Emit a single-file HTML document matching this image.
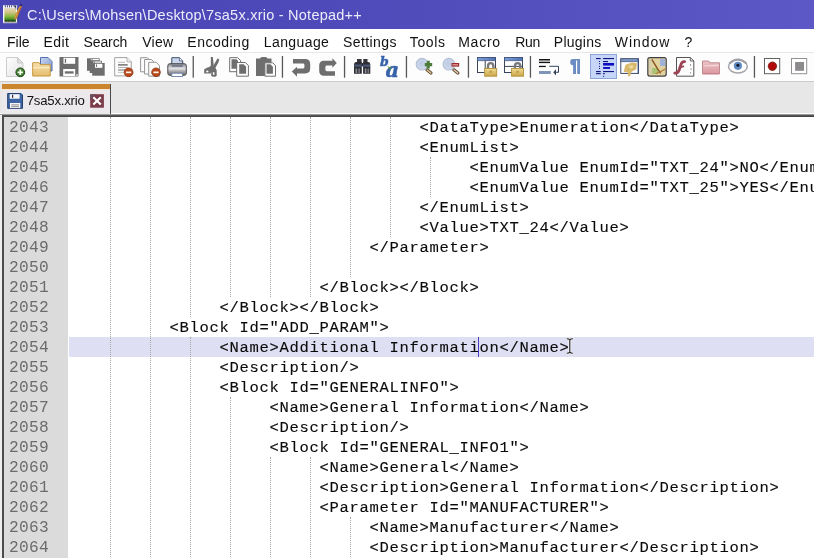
<!DOCTYPE html>
<html><head><meta charset="utf-8"><title>Notepad++</title>
<style>
html,body{margin:0;padding:0;}
body{width:814px;height:558px;overflow:hidden;position:relative;background:#eee;font-family:"Liberation Sans",sans-serif;}
#win{position:absolute;left:0;top:0;width:814px;height:558px;overflow:hidden;will-change:transform;opacity:.999}
#title{position:absolute;left:0;top:0;width:814px;height:29px;background:linear-gradient(90deg,#4a45b4 0%,#4e4ab9 40%,#5c59c6 100%);}
#title .t{position:absolute;left:27px;top:3.5px;color:#ecebfc;font-size:14.5px;letter-spacing:.24px;line-height:22px;white-space:pre;}
#menu{position:absolute;left:0;top:29px;width:814px;height:24px;background:#fff;}
#menu span{position:absolute;top:5.1px;font-size:14px;line-height:16px;color:#111;white-space:pre;}
#tool{position:absolute;left:0;top:52.4px;width:814px;height:29px;background:#fdfdfd;border-top:1.4px solid #e7e7e7;box-sizing:border-box}
#tabbar{position:absolute;left:0;top:81.3px;width:814px;height:34px;background:#e7e7e7;border-top:1px solid #cbcbcb;box-sizing:border-box}
#tab{position:absolute;left:2.1px;top:84.1px;width:108px;height:29.8px;background:#ece9ed;border-right:1.9px solid #4a4a4a;box-sizing:content-box}
#tab .bar{position:absolute;left:0;top:0;width:108px;height:5.4px;background:#cb852d;border-bottom:1px solid #fbe6cf}
#tab .lbl{position:absolute;left:24.6px;top:9.8px;letter-spacing:-.22px;font-size:13.2px;line-height:14px;color:#111;white-space:pre}
#edtop{position:absolute;left:2.1px;top:115.2px;width:812px;height:1.75px;background:linear-gradient(#5c5c5c,#3e3e3e)}
#edleft{position:absolute;left:2.1px;top:115.4px;width:1.8px;height:443px;background:#4c4c4c}
#edlite{position:absolute;left:0;top:112.7px;width:814px;height:2.7px;background:linear-gradient(#fdfdfd 0,#fdfdfd 62%,#9a9a9a 63%,#9a9a9a 100%)}
#lmargin{position:absolute;left:3.9px;top:116.9px;width:64px;height:441px;background:#dcdbdc}
#ed{position:absolute;left:68px;top:117px;width:746px;height:441px;background:#fff;overflow:hidden}
.ln{position:absolute;left:9.1px;font:16.2px/20px "Liberation Mono",monospace;letter-spacing:.28px;color:#6c6c6c;white-space:pre;height:20px;margin-top:.7px}
.cl{position:absolute;font:15.5px/20px "Liberation Mono",monospace;letter-spacing:.7px;color:#0a0a0a;-webkit-text-stroke:.12px #0a0a0a;white-space:pre;height:20px;margin-top:1.2px}
.g{position:absolute;width:0;border-left:1px dotted #a8a8a8;}
#hl{position:absolute;left:69px;top:337px;width:745px;height:20px;background:#dfdff3}
svg{position:absolute;overflow:visible}
</style></head><body><div id="win">
<div id="title"><span class="t">C:\Users\Mohsen\Desktop\7sa5x.xrio - Notepad++</span></div>
<div id="menu"><span style="left:7px;letter-spacing:0px">File</span><span style="left:43.6px;letter-spacing:0.4px">Edit</span><span style="left:83.5px;letter-spacing:-0.1px">Search</span><span style="left:142.2px;letter-spacing:0.3px">View</span><span style="left:187.3px;letter-spacing:0.5px">Encoding</span><span style="left:263.8px;letter-spacing:0.4px">Language</span><span style="left:343px;letter-spacing:0.4px">Settings</span><span style="left:409.8px;letter-spacing:0.6px">Tools</span><span style="left:458.2px;letter-spacing:0.75px">Macro</span><span style="left:515.3px;letter-spacing:-0.3px">Run</span><span style="left:553.8px;letter-spacing:0.25px">Plugins</span><span style="left:614.8px;letter-spacing:0.95px">Window</span><span style="left:684.5px;letter-spacing:0px">?</span></div>
<div id="tool"></div>
<div id="tabbar"></div>
<div id="edlite"></div>
<div id="tab"><div class="bar"></div><span class="lbl">7sa5x.xrio</span></div>
<div id="lmargin"></div><div id="ed"></div><div id="edtop"></div><div id="edleft"></div>
<div id="hl"></div>
<div class="g" style="left:110px;top:117px;height:440px"></div><div class="g" style="left:150px;top:117px;height:440px"></div><div class="g" style="left:190px;top:117px;height:200px"></div><div class="g" style="left:190px;top:337px;height:220px"></div><div class="g" style="left:230px;top:117px;height:180px"></div><div class="g" style="left:230px;top:397px;height:160px"></div><div class="g" style="left:270px;top:117px;height:180px"></div><div class="g" style="left:270px;top:457px;height:100px"></div><div class="g" style="left:310px;top:117px;height:180px"></div><div class="g" style="left:310px;top:457px;height:100px"></div><div class="g" style="left:350px;top:117px;height:160px"></div><div class="g" style="left:350px;top:517px;height:40px"></div><div class="g" style="left:390px;top:117px;height:120px"></div><div class="g" style="left:430px;top:157px;height:40px"></div>
<div class="ln" style="top:117px">2043</div><div class="cl" style="top:117px;left:419.4px">&lt;DataType&gt;Enumeration&lt;/DataType&gt;</div>
<div class="ln" style="top:137px">2044</div><div class="cl" style="top:137px;left:419.4px">&lt;EnumList&gt;</div>
<div class="ln" style="top:157px">2045</div><div class="cl" style="top:157px;left:469.4px">&lt;EnumValue EnumId="TXT_24"&gt;NO&lt;/EnumValue&gt;</div>
<div class="ln" style="top:177px">2046</div><div class="cl" style="top:177px;left:469.4px">&lt;EnumValue EnumId="TXT_25"&gt;YES&lt;/EnumValue&gt;</div>
<div class="ln" style="top:197px">2047</div><div class="cl" style="top:197px;left:419.4px">&lt;/EnumList&gt;</div>
<div class="ln" style="top:217px">2048</div><div class="cl" style="top:217px;left:419.4px">&lt;Value&gt;TXT_24&lt;/Value&gt;</div>
<div class="ln" style="top:237px">2049</div><div class="cl" style="top:237px;left:369.4px">&lt;/Parameter&gt;</div>
<div class="ln" style="top:257px">2050</div>
<div class="ln" style="top:277px">2051</div><div class="cl" style="top:277px;left:319.4px">&lt;/Block&gt;&lt;/Block&gt;</div>
<div class="ln" style="top:297px">2052</div><div class="cl" style="top:297px;left:219.4px">&lt;/Block&gt;&lt;/Block&gt;</div>
<div class="ln" style="top:317px">2053</div><div class="cl" style="top:317px;left:169.4px">&lt;Block Id="ADD_PARAM"&gt;</div>
<div class="ln" style="top:337px">2054</div><div class="cl" style="top:337px;left:219.4px">&lt;Name&gt;Additional Information&lt;/Name&gt;</div>
<div class="ln" style="top:357px">2055</div><div class="cl" style="top:357px;left:219.4px">&lt;Description/&gt;</div>
<div class="ln" style="top:377px">2056</div><div class="cl" style="top:377px;left:219.4px">&lt;Block Id="GENERALINFO"&gt;</div>
<div class="ln" style="top:397px">2057</div><div class="cl" style="top:397px;left:269.4px">&lt;Name&gt;General Information&lt;/Name&gt;</div>
<div class="ln" style="top:417px">2058</div><div class="cl" style="top:417px;left:269.4px">&lt;Description/&gt;</div>
<div class="ln" style="top:437px">2059</div><div class="cl" style="top:437px;left:269.4px">&lt;Block Id="GENERAL_INFO1"&gt;</div>
<div class="ln" style="top:457px">2060</div><div class="cl" style="top:457px;left:319.4px">&lt;Name&gt;General&lt;/Name&gt;</div>
<div class="ln" style="top:477px">2061</div><div class="cl" style="top:477px;left:319.4px">&lt;Description&gt;General Information&lt;/Description&gt;</div>
<div class="ln" style="top:497px">2062</div><div class="cl" style="top:497px;left:319.4px">&lt;Parameter Id="MANUFACTURER"&gt;</div>
<div class="ln" style="top:517px">2063</div><div class="cl" style="top:517px;left:369.4px">&lt;Name&gt;Manufacturer&lt;/Name&gt;</div>
<div class="ln" style="top:537px">2064</div><div class="cl" style="top:537px;left:369.4px">&lt;Description&gt;Manufacturer&lt;/Description&gt;</div>
<svg style="left:0;top:52px" width="814" height="32" viewBox="0 52 814 32">
<defs>
<linearGradient id="gpage" x1="0" y1="0" x2="1" y2="1"><stop offset="0" stop-color="#ffffff"/><stop offset="1" stop-color="#e2e2e2"/></linearGradient>
<linearGradient id="gfold" x1="0" y1="0" x2="0" y2="1"><stop offset="0" stop-color="#f6e2ae"/><stop offset="1" stop-color="#e6bc6c"/></linearGradient>
<linearGradient id="gblue" x1="0" y1="0" x2="1" y2="1"><stop offset="0" stop-color="#c9d6f0"/><stop offset="1" stop-color="#7d98cf"/></linearGradient>
<linearGradient id="glock" x1="0" y1="0" x2="0" y2="1"><stop offset="0" stop-color="#f0dc92"/><stop offset="1" stop-color="#c9a548"/></linearGradient>
<linearGradient id="gwin" x1="0" y1="0" x2="1" y2="0"><stop offset="0" stop-color="#7f9fd6"/><stop offset="1" stop-color="#4f74b4"/></linearGradient>
<linearGradient id="gprn" x1="0" y1="0" x2="0" y2="1"><stop offset="0" stop-color="#85858a"/><stop offset=".42" stop-color="#e2e2e4"/><stop offset=".7" stop-color="#a0a0a4"/><stop offset="1" stop-color="#6a6a6e"/></linearGradient>
<linearGradient id="gpink" x1="0" y1="0" x2="0" y2="1"><stop offset="0" stop-color="#ecc4c6"/><stop offset="1" stop-color="#dc98a0"/></linearGradient>
<radialGradient id="glens" cx=".45" cy=".45" r=".6"><stop offset="0" stop-color="#bccae2"/><stop offset=".7" stop-color="#ccd7ea"/><stop offset="1" stop-color="#dde4f0"/></radialGradient>
</defs>
<!-- separators -->
<g fill="#585858">
<rect x="192.6" y="56" width="1.3" height="21.7"/>
<rect x="281.8" y="56" width="1.3" height="21.7"/>
<rect x="343.9" y="56" width="1.3" height="21.7"/>
<rect x="405.8" y="56" width="1.3" height="21.7"/>
<rect x="467.8" y="56" width="1.3" height="21.7"/>
<rect x="529.8" y="56" width="1.3" height="21.7"/>
<rect x="753.8" y="56" width="1.3" height="21.7"/>
</g>
<!-- 1 new -->
<path d="M6.5 57.5h11l5.5 5.5v13.5h-16.5z" fill="url(#gpage)" stroke="#cdcdcd" stroke-width="1"/>
<path d="M17.5 57.5v5.5h5.5z" fill="#dedede" stroke="#c4c4c4" stroke-width=".8"/>
<circle cx="20.3" cy="72.3" r="4.4" fill="#3d7d2c" stroke="#2c4a22" stroke-width="1"/>
<path d="M20.3 69.6v5.4M17.6 72.3h5.4" stroke="#f4fff0" stroke-width="1.7"/>
<!-- 2 open -->
<path d="M40.5 57.5h7.5l4 4v9.5h-11.5z" fill="url(#gblue)" stroke="#5571ad" stroke-width="1"/>
<path d="M32.7 76v-13.3h6.3l1.5 2h9.7v11.3z" fill="url(#gfold)" stroke="#c8953c" stroke-width="1"/>
<path d="M33.2 67.8h16.6" stroke="#fbf0d2" stroke-width="1"/>
<!-- 3 save -->
<path d="M59.5 57h19v19.5h-19z" fill="#6e6e6e"/>
<rect x="63.5" y="57.8" width="11.7" height="6" fill="#fff"/>
<rect x="64.8" y="58.8" width="1.3" height="4" fill="#6e6e6e"/>
<rect x="63.2" y="69" width="12" height="7" fill="#fff"/>
<rect x="64.8" y="71.3" width="8.8" height="2.3" fill="#6e6e6e"/>
<rect x="76.3" y="74.3" width="1.5" height="1.5" fill="#fff"/>
<!-- 4 save all -->
<g fill="#6e6e6e">
<rect x="87" y="58.3" width="12.7" height="12.5"/>
<rect x="89.7" y="60.8" width="12.3" height="12.2"/>
<rect x="92.2" y="63" width="12.5" height="12.7"/>
</g>
<rect x="90.8" y="59" width="8" height="1.2" fill="#fff"/><rect x="91.6" y="59" width="1" height="1.2" fill="#6e6e6e"/>
<rect x="93.2" y="61.5" width="8" height="1.2" fill="#fff"/><rect x="94" y="61.5" width="1" height="1.2" fill="#6e6e6e"/>
<rect x="95" y="63.8" width="7.4" height="4" fill="#fff"/><rect x="96" y="64.3" width="1" height="2.6" fill="#6e6e6e"/>
<!-- 5 close -->
<path d="M114.7 57.6h12.3l4.3 4.3v14h-16.6z" fill="#fdfdfd" stroke="#a2a2a2" stroke-width="1"/>
<path d="M127 57.6v4.3h4.3" fill="#eee" stroke="#a2a2a2" stroke-width=".8"/>
<path d="M118 62.3h7" stroke="#bbb" stroke-width="1"/>
<path d="M118 64.9h9.7" stroke="#7a7a7a" stroke-width="1.6"/>
<path d="M118 67.5h9.7" stroke="#b0b0b0" stroke-width="1"/>
<path d="M118 70h8" stroke="#a4a4a4" stroke-width="1.6"/>
<path d="M118 72.4h6" stroke="#c4c4c4" stroke-width="1"/>
<circle cx="128.6" cy="72.3" r="4.4" fill="#b9481b" stroke="#8a3414" stroke-width=".8"/>
<rect x="125.9" y="71.5" width="5.4" height="1.7" fill="#fff3e8"/>
<!-- 6 close all -->
<path d="M140.6 57.7h6.8l2.4 2.4v11.7h-9.2z" fill="#fdfdfd" stroke="#959595" stroke-width="1"/>
<path d="M144.6 59.5h6.8l2.4 2.4v12.1h-9.2z" fill="#fdfdfd" stroke="#959595" stroke-width="1"/>
<path d="M148.7 62.3h7.5l3.3 3.3v10.6h-10.8z" fill="#fbfbfb" stroke="#959595" stroke-width="1"/>
<circle cx="156" cy="72.3" r="4.3" fill="#b9481b" stroke="#8a3414" stroke-width=".8"/>
<rect x="153.4" y="71.5" width="5.2" height="1.7" fill="#fff3e8"/>
<!-- 7 print -->
<path d="M171.8 66v-8.3h7.6l3.3 3.3v5z" fill="#c9d6ec" stroke="#3d4c6c" stroke-width="1"/>
<path d="M179.4 57.7v3.3h3.3" fill="#e4ebf6" stroke="#3d4c6c" stroke-width=".7"/>
<rect x="167.8" y="63.7" width="18.5" height="11.6" rx="2" fill="url(#gprn)" stroke="#4a4a50" stroke-width="1"/>
<path d="M171.8 66h11" stroke="#3d4c6c" stroke-width="1"/>
<rect x="171.8" y="73.2" width="10.6" height="3.3" fill="#fff" stroke="#6a7ea8" stroke-width=".9"/>
<!-- cut -->
<g fill="#6e6e6e">
<path d="M210.800 57h2.100l1 10.500h-3.100z"/>
<path d="M217.400 58.500l1.900.8-.9 3.200-3.400 6-2.500-1.300z"/>
<path d="M204.200 69.200l3.300-1.700 4.300-1 .5 3.500-1.500 3.500h-6.600z"/>
<path d="M211.300 67.500h4l1.400 3v5l-1.200 1.300h-3l-1.300-1.500z"/>
<path d="M209 67l3-1.800 2.800 1.600-1 2.700h-3z"/>
</g>
<rect x="206.300" y="70.600" width="2.100" height="1.700" fill="#fff"/>
<rect x="212.900" y="72.200" width="1.500" height="2.600" fill="#fff"/>
<!-- copy -->
<path d="M229.700 57.700h8l3 3v11h-11z" fill="#fff" stroke="#6e6e6e" stroke-width="1"/>
<path d="M231.500 59.200h5l1.500 1.500v8h-6.500z" fill="#6e6e6e"/>
<path d="M236.700 62.500h8.700l3 3v10.700h-11.700z" fill="#fff" stroke="#6e6e6e" stroke-width="1"/>
<path d="M239.200 64.300h4.400l2.500 2.500v6.900h-6.900z" fill="#6e6e6e"/>
<!-- paste -->
<path d="M256 58.500h4q.5-1.500 2-1.500h3.500q1.500 0 2 1.500h4v17.500h-15.500z" fill="#6e6e6e"/>
<path d="M264.900 62.800h7.800l2.800 2.800v10.600h-10.600z" fill="#fff" stroke="#6e6e6e" stroke-width="1"/>
<path d="M266.500 64.300h4l2.400 2.400v7h-6.400z" fill="#6e6e6e"/>
<!-- undo -->
<path d="M293 59H305Q310.200 59 310.200 64V68.500Q310.200 73.400 305 73.400H297V76.700L291.800 71.600L297 66.700V68.600H303Q304.400 68.600 304.400 67.200V64.800Q304.400 63.400 303 63.400H293Z" fill="#6e6e6e"/>
<!-- redo -->
<path d="M335 75.700H324Q319.200 75.700 319.200 71V65.600Q319.200 60.800 324 60.800H332.400V58.300L336.800 63L332.400 67.800V65.600H327Q325.400 65.600 325.400 67V69.800Q325.400 71.200 327 71.200H335Z" fill="#6e6e6e"/>
<!-- find (binoculars) -->
<g>
<rect x="357" y="59" width="4.600" height="4" fill="#34343c"/>
<rect x="363.300" y="59" width="4.200" height="4" fill="#34343c"/>
<path d="M354 64.500q0-2.500 2-2.500h5.800v11.700h-7.800z" fill="#2c2c34"/>
<path d="M363.100 62h5.200q2 0 2 2.500v9.200h-7.200z" fill="#2c2c34"/>
<rect x="354.500" y="64.500" width="15.500" height="2.200" fill="#55648a" opacity=".8"/>
<rect x="355.500" y="68.500" width="1.600" height="4.500" fill="#8c8c94"/>
<rect x="358.300" y="68.500" width="1.600" height="4.500" fill="#77777f"/>
<rect x="364.800" y="68.500" width="1.600" height="4.500" fill="#8c8c94"/>
<rect x="367.500" y="68.500" width="1.600" height="4.500" fill="#77777f"/>
<rect x="361.500" y="63" width="1.800" height="3" fill="#2c2c34"/>
</g>
<!-- replace -->
<g font-family="'DejaVu Serif','Liberation Serif',serif" font-weight="bold" font-style="italic" fill="#3862aa" stroke="#3862aa" stroke-width=".5">
<text x="380" y="66.300" font-size="12.500">b</text>
<text x="385.600" y="76.500" font-size="21">a</text>
</g>
<path d="M387.300 66.300l3.400 4-.2-2.700 2.200.2z" fill="#4f9a3a"/>
<!-- zoom in -->
<path d="M427 69.800l3.900 3.200" stroke="#5e4a2c" stroke-width="3.300" stroke-linecap="round"/>
<path d="M427.200 70l3.500 2.900" stroke="#d9c298" stroke-width="1.500" stroke-linecap="round"/>
<circle cx="422" cy="64.200" r="5.800" fill="url(#glens)" stroke="#b2bfd6" stroke-width="1.100"/>
<path d="M426.800 60.700h3v2.300h2.400v3.200h-2.400v2.400h-3v-2.400h-2v-3.200h2z" fill="#4b7c3c"/>
<!-- zoom out -->
<path d="M453.900 69.800l3.900 3.200" stroke="#5e4a2c" stroke-width="3.300" stroke-linecap="round"/>
<path d="M454.100 70l3.500 2.900" stroke="#e2c4b4" stroke-width="1.500" stroke-linecap="round"/>
<circle cx="448.900" cy="64.200" r="5.800" fill="url(#glens)" stroke="#b2bfd6" stroke-width="1.100"/>
<rect x="451.500" y="63" width="7.700" height="3.600" fill="#9c2c2c"/>
<rect x="452.500" y="64" width="5.500" height="1.500" fill="#d88c8c"/>
<!-- sync V -->
<rect x="477.500" y="57.500" width="18" height="15" fill="#fff" stroke="#3c4456" stroke-width="1"/>
<rect x="477.500" y="57.500" width="18" height="3.300" fill="url(#gwin)" stroke="#3c4c74" stroke-width=".6"/>
<path d="M485.200 60.800v11.700" stroke="#3c4456" stroke-width="1"/>
<path d="M488 68.500v-2.300q0-3.100 2.700-3.100t2.700 3.100v2.300" fill="none" stroke="#7a7a7c" stroke-width="2.400"/>
<rect x="484.700" y="68.500" width="12" height="7.700" fill="url(#glock)" stroke="#b4923a" stroke-width=".9"/>
<rect x="489.300" y="70.800" width="2.800" height="2" fill="#c49a4a"/>
<!-- sync H -->
<rect x="504.500" y="57.500" width="18" height="15" fill="#fff" stroke="#3c4456" stroke-width="1"/>
<rect x="504.500" y="57.500" width="18" height="3.300" fill="url(#gwin)" stroke="#3c4c74" stroke-width=".6"/>
<path d="M504.500 66.400h18" stroke="#3c4456" stroke-width="1"/>
<path d="M514.900 68.500v-2.300q0-3.100 2.700-3.100t2.700 3.100v2.300" fill="none" stroke="#7a7a7c" stroke-width="2.400"/>
<rect x="511.600" y="68.500" width="12" height="7.700" fill="url(#glock)" stroke="#b4923a" stroke-width=".9"/>
<rect x="516.200" y="70.800" width="2.800" height="2" fill="#c49a4a"/>
<!-- wrap -->
<rect x="539" y="59" width="11" height="1.500" fill="#151515"/>
<rect x="539" y="61.700" width="11" height="1.400" fill="#151515"/>
<rect x="539" y="65.800" width="6.800" height="1.300" fill="#151515"/>
<path d="M549.300 66.300h9.200v6h-3.500" fill="none" stroke="#36435e" stroke-width="1"/>
<path d="M553.200 72.300l2.800-3.100v6.200z" fill="#36435e"/>
<rect x="539" y="71" width="11.800" height="3" fill="#8094ba"/>
<!-- pilcrow -->
<path d="M573 59h7v15h-2.800v-13.500h-1.200v13.500h-2.900v-8.700q-2.900 0-2.900-3.200t2.800-3.100z" fill="#6b8cc2"/>
<!-- indent guide (active) -->
<rect x="590.500" y="54.500" width="26" height="24" fill="#c5d6f8" stroke="#8ea6d6" stroke-width="1"/>
<g fill="#12127e">
<rect x="596" y="58" width="4.700" height="1.100"/><rect x="603.100" y="58" width="10.900" height="1.100"/>
<rect x="599" y="61" width="1" height="1"/><rect x="603.100" y="61" width="4.900" height="1.100"/>
<rect x="599" y="63.200" width="1" height="1"/><rect x="603.100" y="63" width="10.900" height="2.600" fill="#0c0cc0"/>
<rect x="599" y="65.900" width="1" height="1"/><rect x="599" y="68" width="1" height="1"/>
<rect x="603.100" y="67" width="6.900" height="1.900" fill="#0c0cc0"/>
<rect x="596" y="71" width="4.700" height="1.100"/><rect x="603.100" y="71" width="10.900" height="1.100"/>
<rect x="596" y="73.100" width="4.700" height="1.100"/><rect x="603.100" y="73.100" width="1.800" height="1.100"/>
<rect x="603.100" y="75.800" width="1" height="1"/>
</g>
<!-- UDL -->
<rect x="620.800" y="58.800" width="17.700" height="14.600" fill="#fff" stroke="#3c4a66" stroke-width="1"/>
<rect x="620.800" y="58.800" width="17.700" height="3" fill="#7c98c6" stroke="#3c4a66" stroke-width=".6"/><rect x="637.600" y="59" width="1.300" height="14.400" fill="#3c5282"/>
<path d="M625.500 64.800l6.500-2.300 5 .8-.8 6-4.200 2.200-1.200 1.500-.6 3.200h-2.200l.2-3.600-4.600-.8z" fill="#d9ba6c"/>
<path d="M628 66l4-.8 2 1.500-3 2.300z" fill="#ecd9a0"/>
<!-- doc map -->
<rect x="647.800" y="57.600" width="18.400" height="18.500" rx="2" fill="#e2d2a2" stroke="#404040" stroke-width="1.200"/>
<rect x="660" y="59" width="5.200" height="7" fill="#9cb2da"/>
<rect x="652" y="68" width="6" height="6" fill="#aac474"/>
<rect x="649" y="59" width="2.500" height="15.500" fill="#d2cdb4" opacity=".7"/>
<path d="M651.800 59.400l5.500 9 3.300 5" stroke="#8a5a22" stroke-width="1.500" fill="none"/>
<path d="M665 69l-5.300 3.300-4 1.200" stroke="#b07a30" stroke-width="1.200" fill="none"/>
<!-- function list -->
<path d="M676.500 57.500h13.800l3.500 3.500v15.200h-17.300z" fill="#fdfdfd" stroke="#555" stroke-width="1"/>
<path d="M690.300 57.500v3.500h3.500" fill="none" stroke="#555" stroke-width=".9"/>
<path d="M684.600 61.700q-2.700-.3-3.700 3l-1.700 5.300q-1 3.200-4.400 3.200" fill="none" stroke="#9c4456" stroke-width="2.800" stroke-linecap="round"/>
<path d="M678.800 68l5.200-1.800" stroke="#9c4456" stroke-width="1.800"/>
<path d="M690.500 64v2M691 68v2M690.500 72v1.500" stroke="#999" stroke-width=".9"/>
<!-- folder as workspace -->
<path d="M702.500 73.600v-12.600h6.200l1 1.800h9.800v10.800z" fill="url(#gpink)" stroke="#c08a92" stroke-width="1"/>
<path d="M703.500 66l15-.6" stroke="#f4dcdc" stroke-width="1.200"/>
<path d="M702.500 73.800h17" stroke="#c87c86" stroke-width="1.200"/>
<!-- monitoring eye -->
<ellipse cx="737.900" cy="66.400" rx="9.400" ry="6.700" fill="#fff" stroke="#a4a4aa" stroke-width="1.500"/>
<path d="M729.500 63.500q8.400-8 16.800 0" fill="none" stroke="#a0a0a8" stroke-width="2"/>
<circle cx="737.900" cy="65.800" r="4.100" fill="#6289c0"/>
<circle cx="737.900" cy="65.300" r="1.500" fill="#10141c"/>
<!-- record -->
<rect x="764.500" y="58.500" width="15.200" height="15.200" fill="#fff" stroke="#626262" stroke-width="1"/>
<circle cx="772.400" cy="66.200" r="4.200" fill="#b20a0a" stroke="#6e1c10" stroke-width=".8"/>
<!-- stop -->
<rect x="791.500" y="58.500" width="15.200" height="15.200" fill="#fff" stroke="#929292" stroke-width="1"/>
<rect x="795.100" y="62" width="8.900" height="8.800" fill="#8c8a8c"/>
</svg>
<svg style="left:0;top:0" width="40" height="30" viewBox="0 0 40 30">
<defs>
<linearGradient id="gapp" x1="0" y1="0" x2="0" y2="1"><stop offset="0" stop-color="#e4dcc0"/><stop offset=".3" stop-color="#d4c488"/><stop offset=".62" stop-color="#86b83c"/><stop offset=".85" stop-color="#3e8420"/><stop offset="1" stop-color="#1c3a12"/></linearGradient>
</defs>
<rect x="3" y="5.200" width="14.200" height="18" fill="#f4f4fa"/>
<rect x="4.400" y="8" width="11.600" height="13.700" fill="url(#gapp)"/>
<rect x="3.600" y="22.200" width="13.600" height="1" fill="#555" opacity=".5"/>
<g fill="#55557a"><rect x="4.800" y="5.200" width="1" height="2.200"/><rect x="6.900" y="5.200" width="1" height="2.200"/><rect x="9" y="5.200" width="1" height="2.200"/><rect x="11.100" y="5.200" width="1" height="2.200"/></g>
<path d="M12.900 5.500h3.300v4.200z" fill="#30303c"/>
<path d="M13.800 6.300l2 2.400" stroke="#cfe0f4" stroke-width="1"/>
<rect x="17.200" y="8" width="1.300" height="14.500" fill="#2c2c70" opacity=".55"/>
<path d="M21.300 4.400l.9 1.400-2.200 5.400-3.600 8.400-2.400-.8 1.600-4.800 3-6z" fill="#bd8438"/>
<path d="M19.800 7l-4.600 10.500" stroke="#d9a24c" stroke-width="1.100"/>
<path d="M20.600 8l-2.600 6" stroke="#c4401e" stroke-width="1.100" stroke-dasharray="1.200 1"/>
<rect x="20.300" y="4.200" width="1.700" height="1.700" fill="#18186c"/>
<g fill="#1c2c14"><rect x="5.200" y="20.300" width="1.600" height=".9"/><rect x="7.800" y="20.300" width="1.600" height=".9"/><rect x="11.600" y="20.300" width="2.200" height=".9"/></g>
</svg>
<svg style="left:0;top:90px" width="120" height="24" viewBox="0 90 120 24">
<!-- tab save icon -->
<rect x="6.600" y="92.400" width="16.800" height="17" rx="1.500" fill="#dfe8f8" opacity=".9"/>
<path d="M7.700 93.500h13.300l1.500 1.500v13.300h-14.800z" fill="#3e66a4" stroke="#263e6c" stroke-width="1"/>
<rect x="9.700" y="94.200" width="9.900" height="4.500" fill="#f6f8fc"/>
<rect x="12" y="94.800" width="1.200" height="3" fill="#223"/>
<rect x="10" y="103" width="10.200" height="5" fill="#fafafa"/>
<rect x="11.200" y="104.400" width="7.800" height="1" fill="#8a8a8a"/>
<rect x="11.200" y="106.200" width="7.800" height="1" fill="#8a8a8a"/>
<!-- tab close -->
<rect x="89.600" y="93.600" width="14.800" height="14.600" fill="#f6dfe4"/>
<rect x="90.200" y="94.200" width="13.700" height="13.500" fill="#7b3c4a"/>
<path d="M90.200 94.200h6l-6 6z" fill="#66525c" opacity=".8"/>
<path d="M93.300 97.300l7.500 7.300M100.800 97.300l-7.500 7.300" stroke="#fff" stroke-width="2.100"/>
</svg>
<!-- caret -->
<div style="position:absolute;left:478px;top:337px;width:1px;height:19.500px;background:#4a3cc0"></div>
<!-- I-beam mouse cursor -->
<svg style="left:560px;top:334px" width="20" height="26" viewBox="560 334 20 26">
<path d="M566.800 338.800q2.200 0 3 1.200q.8-1.200 3-1.200M566.800 353.300q2.200 0 3-1.200q.8 1.200 3 1.200M569.800 340v12.100" fill="none" stroke="#fff" stroke-width="2.600" opacity=".85"/>
<path d="M566.800 338.800q2.200 0 3 1.200q.8-1.200 3-1.200M566.800 353.300q2.200 0 3-1.200q.8 1.200 3 1.200M569.800 340v12.100" fill="none" stroke="#1a1a1a" stroke-width="1.100"/>
</svg>
</div></body></html>
